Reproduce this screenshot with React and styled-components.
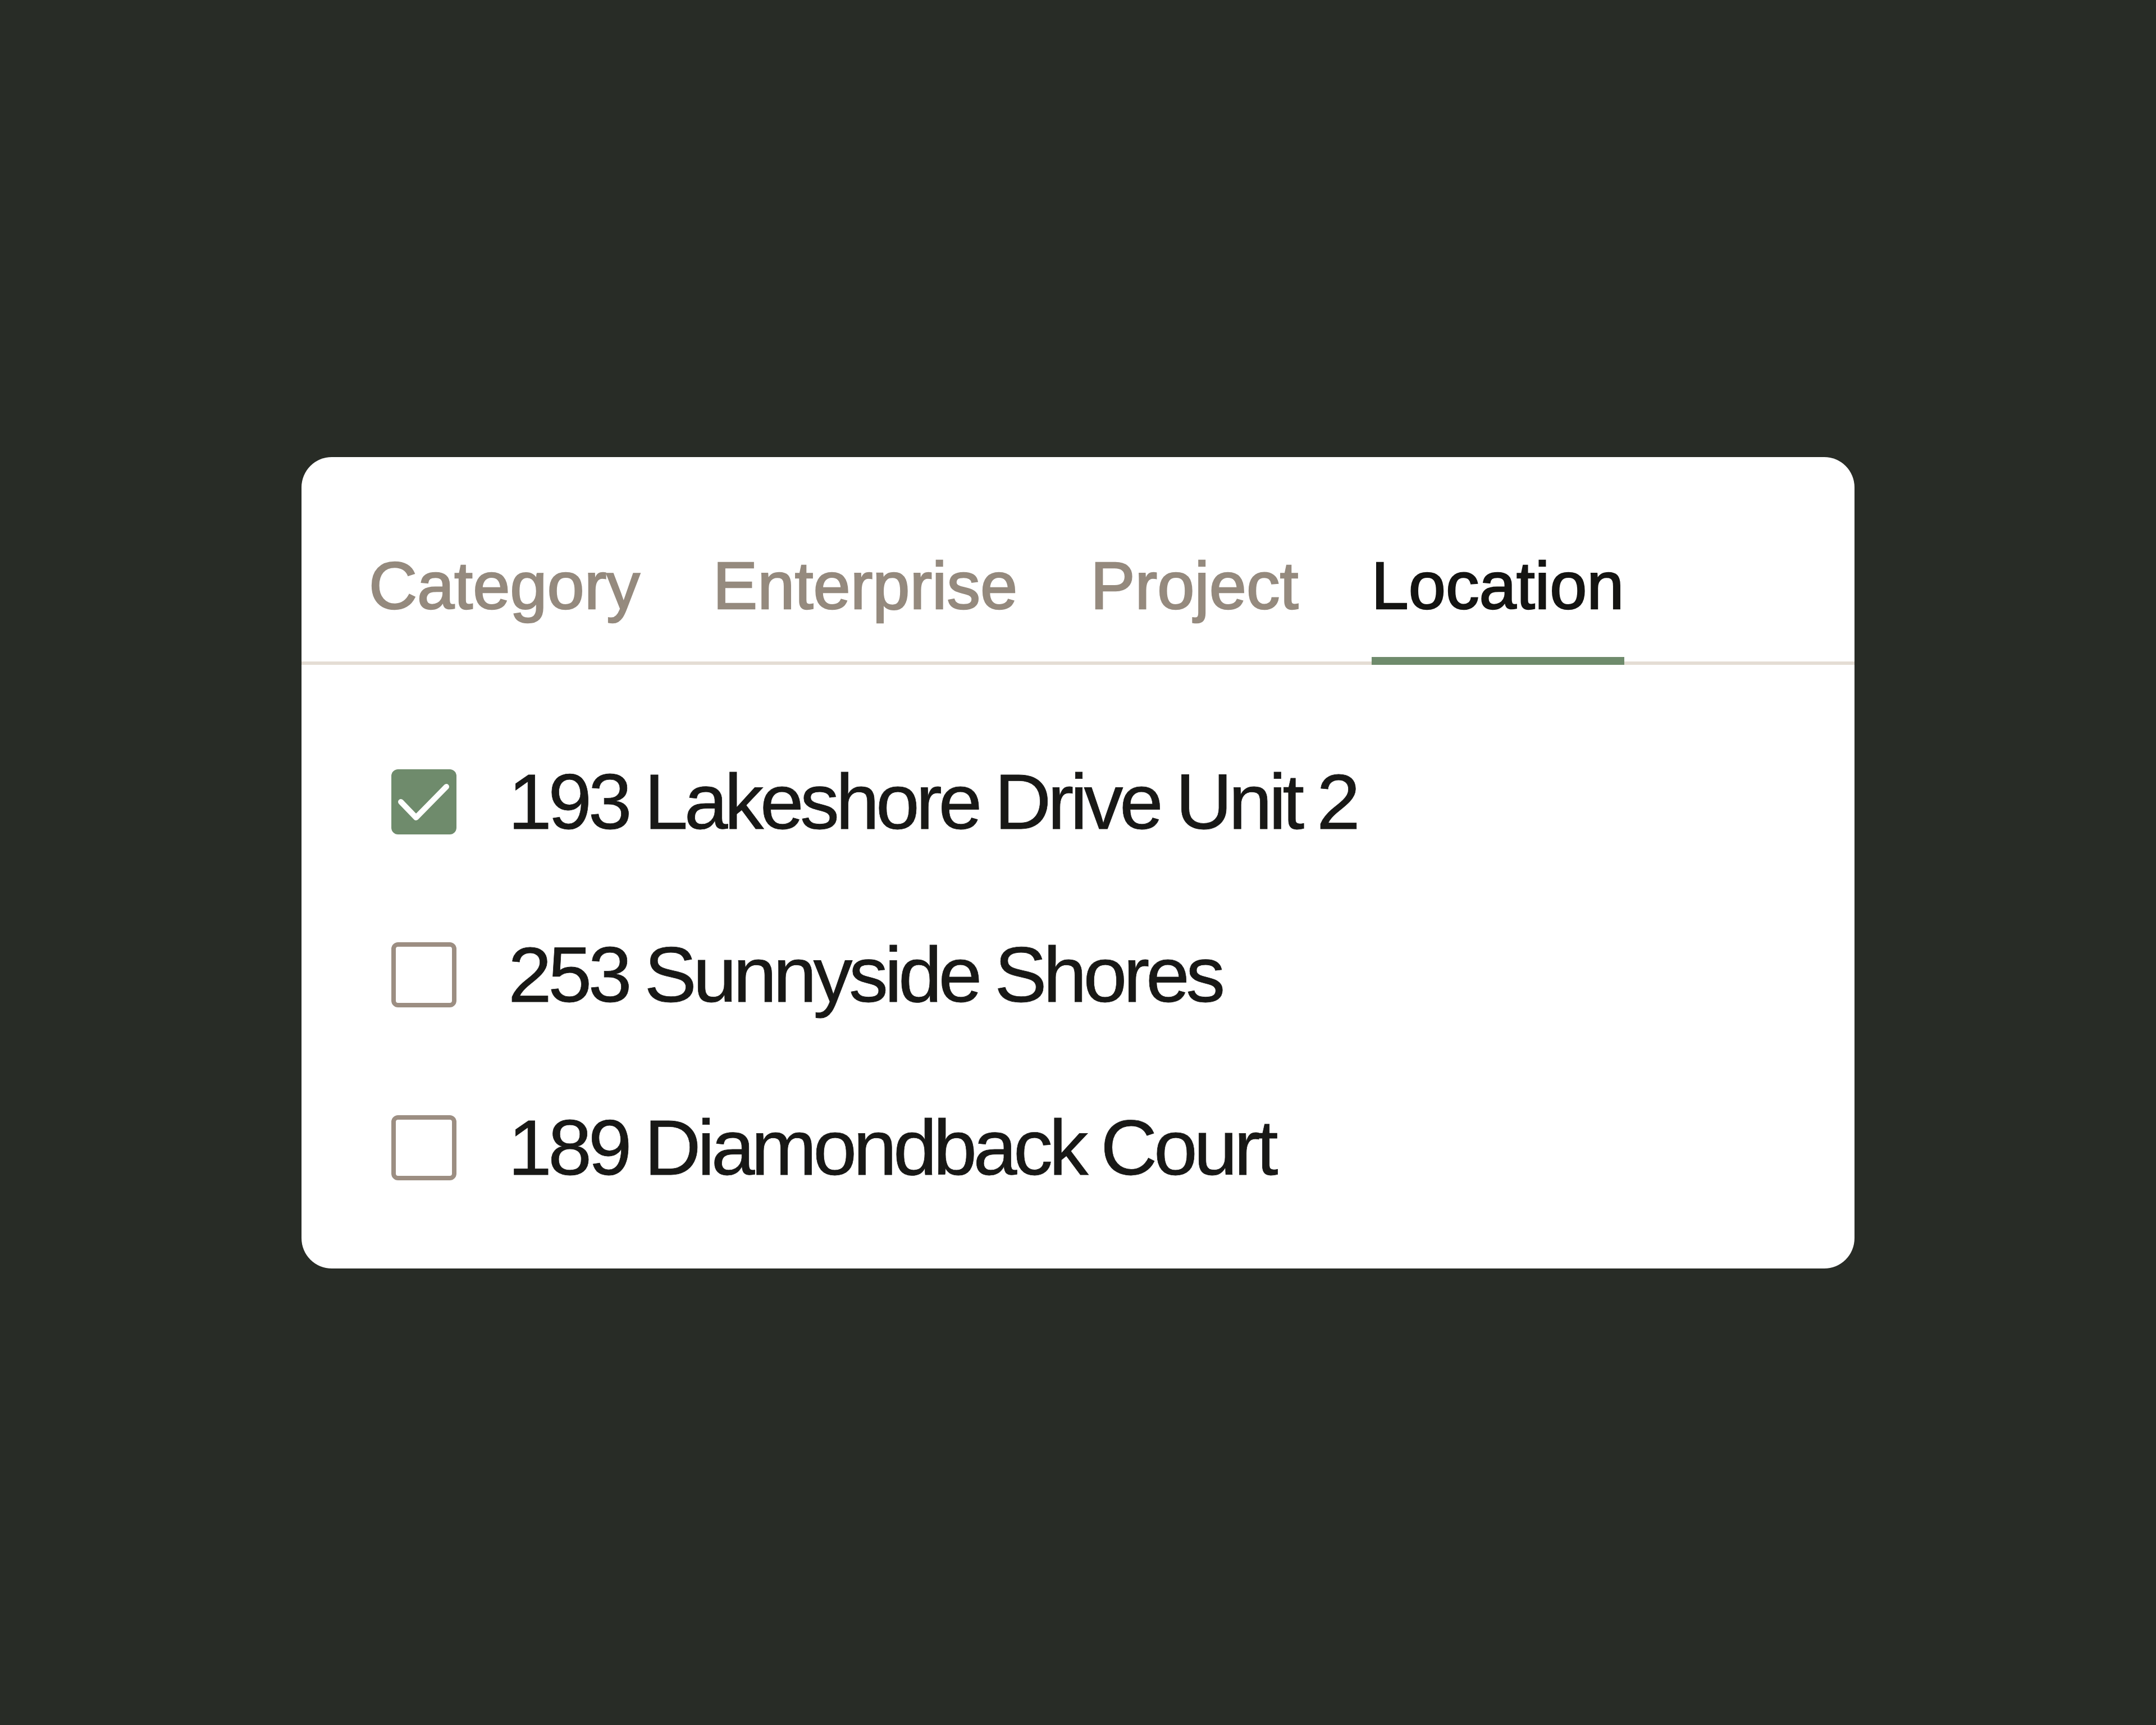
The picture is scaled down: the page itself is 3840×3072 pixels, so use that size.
import React, { useState } from 'react';
import styled, { createGlobalStyle } from 'styled-components';

const GlobalStyle = createGlobalStyle`
  html, body {
    margin: 0;
    padding: 0;
    background: #282c26;
  }
  * { box-sizing: border-box; }
`

const Page = styled.div`
  width: 100%;
  min-height: 3072px;
  display: flex;
  align-items: center;
  justify-content: center;
  font-family: 'Liberation Sans', Arial, sans-serif;
`

const Card = styled.div`
  width: 2766px;
  background: #ffffff;
  border-radius: 54px;
  overflow: hidden;
`

const TabBar = styled.div`
  display: flex;
  gap: 130px;
  padding: 169px 120px 0;
  border-bottom: 6px solid #e4ddd4;
`

const Tab = styled.button`
  appearance: none;
  background: none;
  border: 0;
  margin: 0 0 -6px;
  padding: 0 0 68px;
  border-bottom: 14px solid ${p => (p.$active ? '#6f8b6c' : 'transparent')};
  font-family: inherit;
  font-size: 119px;
  line-height: 1;
  color: ${p => (p.$active ? '#141412' : '#958a7e')};
  -webkit-text-stroke: 2.5px ${p => (p.$active ? '#141412' : '#958a7e')};
  cursor: pointer;
`

const List = styled.div`
  display: flex;
  flex-direction: column;
  gap: 168px;
  padding: 174px 160px 145px;
`

const Row = styled.label`
  display: flex;
  align-items: center;
  gap: 92px;
  cursor: pointer;
`

const Box = styled.span`
  flex: none;
  width: 116px;
  height: 116px;
  border-radius: 12px;
  display: flex;
  align-items: center;
  justify-content: center;
  background: ${p => (p.$checked ? '#6f8b6c' : '#fff')};
  border: ${p => (p.$checked ? 'none' : '8px solid #9c8e82')};
  svg { display: block; }
`

const Text = styled.span`
  font-size: 140px;
  line-height: 1;
  letter-spacing: -6.5px;
  word-spacing: -4px;
  color: #181816;
  -webkit-text-stroke: 0.8px #181816;
  white-space: nowrap;
`

const tabs = ['Category', 'Enterprise', 'Project', 'Location']

const places = [
  '193 Lakeshore Drive Unit 2',
  '253 Sunnyside Shores',
  '189 Diamondback Court'
]

const Check = () => (
  <svg width="116" height="116" viewBox="0 0 116 116">
    <polyline
      points="17,58 44,86 98,31"
      fill="none"
      stroke="#fff"
      strokeWidth="10"
      strokeLinecap="round"
      strokeLinejoin="round"
    />
  </svg>
)

const App = () => {
  const [active, setActive] = useState('Location')
  const [checked, setChecked] = useState([places[0]])

  const toggle = (p) => {
    setChecked(c => (c.includes(p) ? c.filter(x => x !== p) : [...c, p]))
  }

  return (
    <Page>
      <GlobalStyle />
      <Card>
        <TabBar>
          {tabs.map(t => (
            <Tab key={t} $active={t === active} onClick={() => setActive(t)}>{t}</Tab>
          ))}
        </TabBar>
        <List>
          {places.map(p => {
            const on = checked.includes(p)
            return (
              <Row key={p} onClick={() => toggle(p)}>
                <Box $checked={on}>{on && <Check />}</Box>
                <Text>{p}</Text>
              </Row>
            )
          })}
        </List>
      </Card>
    </Page>
  )
}

export default App;
